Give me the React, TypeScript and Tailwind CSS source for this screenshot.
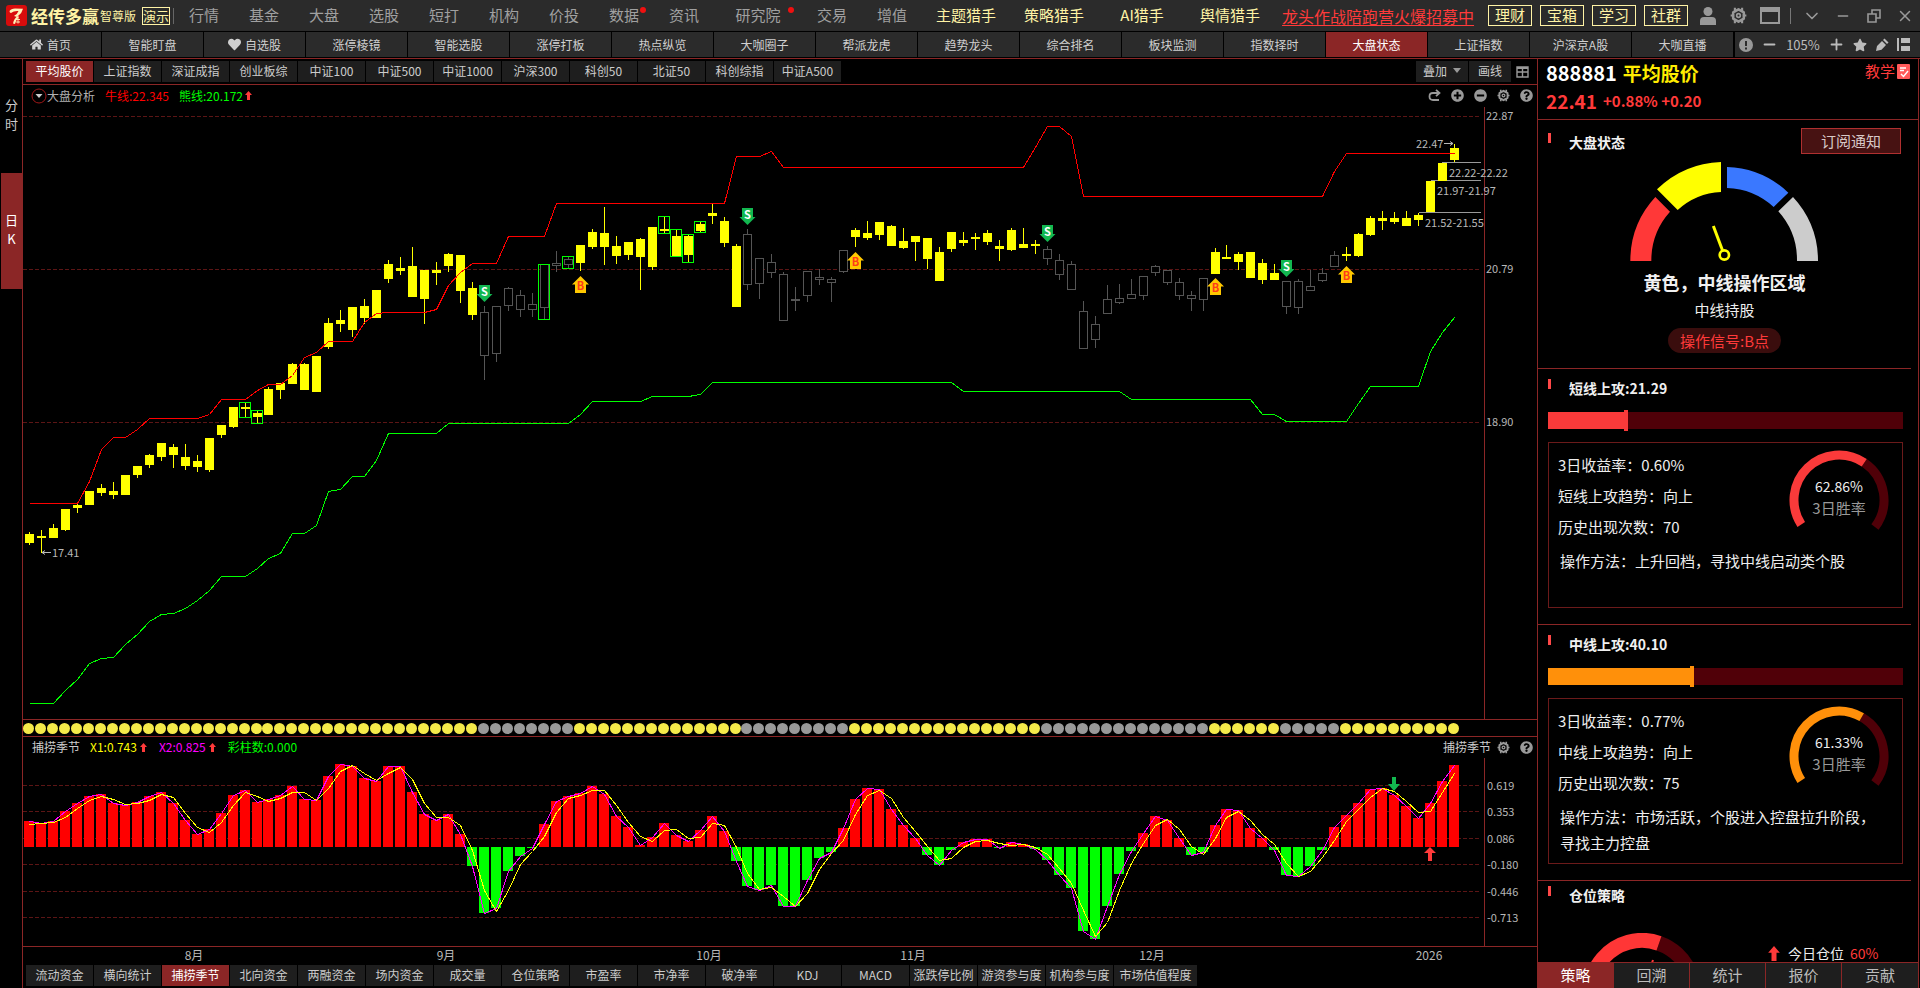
import { ReactNode } from "react";
import clsx from "clsx";
import { ChevronDown, Minus, Plus, X } from "lucide-react";
import { FaHeart, FaHome, FaMinusCircle, FaPlusCircle, FaQuestionCircle, FaStar } from "react-icons/fa";

const MENU = ["行情", "基金", "大盘", "选股", "短打", "机构", "价投", "数据", "资讯", "研究院", "交易", "增值"];
const HUNTERS = ["主题猎手", "策略猎手", "AI猎手", "舆情猎手"];
const BOXED = ["理财", "宝箱", "学习", "社群"];

const PAGES = [
  "首页", "智能盯盘", "自选股", "涨停棱镜", "智能选股", "涨停打板", "热点纵览", "大咖圈子", "帮派龙虎",
  "趋势龙头", "综合排名", "板块监测", "指数择时", "大盘状态", "上证指数", "沪深京A股", "大咖直播",
];

const INDEXES = [
  "平均股价", "上证指数", "深证成指", "创业板综", "中证100", "中证500",
  "中证1000", "沪深300", "科创50", "北证50", "科创综指", "中证A500",
];

const INDICATORS = [
  "流动资金", "横向统计", "捕捞季节", "北向资金", "两融资金", "场内资金", "成交量", "仓位策略", "市盈率",
  "市净率", "破净率", "KDJ", "MACD", "涨跌停比例", "游资参与度", "机构参与度", "市场估值程度",
];

const SIDE_TABS = ["策略", "回溯", "统计", "报价", "贡献"];

// body top, body bottom, high, low
const CANDLES: number[][] = [
  [424, 433, 422, 435], [426, 428, 420, 443], [418, 428, 414, 428], [399, 420, 399, 421], [395, 398, 394, 403],
  [381, 395, 381, 395], [378, 383, 374, 386], [381, 385, 372, 389], [365, 385, 365, 385], [356, 365, 356, 368],
  [345, 355, 344, 358], [333, 347, 333, 351], [337, 345, 334, 358], [347, 356, 334, 360], [351, 357, 345, 362],
  [328, 360, 328, 362], [315, 325, 315, 328], [297, 317, 297, 318], [297, 299, 293, 307], [303, 307, 301, 313],
  [279, 305, 277, 305], [273, 280, 273, 289], [254, 274, 253, 274], [254, 280, 253, 280], [246, 282, 246, 282],
  [213, 237, 208, 239], [210, 214, 200, 222], [197, 220, 197, 227], [196, 208, 189, 214], [180, 208, 180, 208],
  [154, 169, 150, 173], [158, 161, 147, 165], [156, 187, 137, 187], [160, 189, 160, 214], [160, 163, 152, 175],
  [144, 156, 143, 162], [145, 181, 145, 193], [178, 205, 172, 210], [202, 246, 196, 270], [196, 244, 196, 252],
  [178, 196, 177, 201], [185, 200, 180, 207], [194, 200, 183, 207], [154, 198, 154, 210], [153, 156, 141, 162],
  [149, 155, 146, 158], [135, 153, 135, 161], [122, 137, 119, 139], [123, 137, 97, 155], [136, 146, 126, 154],
  [132, 145, 132, 150], [129, 147, 128, 180], [117, 157, 117, 160], [119, 121, 106, 123], [126, 146, 119, 146],
  [126, 145, 124, 152], [114, 121, 111, 122], [103, 106, 94, 114], [111, 133, 107, 137], [136, 197, 134, 197],
  [124, 175, 119, 180], [148, 174, 148, 189], [152, 163, 144, 168], [164, 211, 162, 211], [189, 191, 177, 201],
  [161, 186, 161, 192], [167, 170, 159, 175], [169, 173, 167, 192], [140, 162, 140, 163], [120, 127, 118, 137],
  [123, 128, 111, 130], [112, 125, 112, 130], [116, 136, 115, 136], [131, 138, 118, 139], [126, 132, 126, 151],
  [128, 149, 128, 159], [142, 171, 137, 171], [122, 139, 122, 142], [130, 133, 122, 136], [127, 129, 123, 140],
  [123, 132, 120, 135], [136, 139, 130, 151], [120, 140, 118, 141], [134, 138, 118, 138], [134, 136, 130, 144],
  [139, 149, 136, 155], [150, 165, 144, 170], [154, 180, 151, 180], [201, 239, 191, 239], [214, 230, 206, 238],
  [189, 204, 175, 204], [188, 193, 174, 194], [184, 189, 169, 189], [166, 186, 166, 190], [156, 163, 155, 166],
  [160, 173, 160, 175], [172, 186, 168, 190], [185, 189, 181, 201], [168, 190, 168, 201], [142, 164, 138, 164],
  [147, 149, 135, 149], [144, 152, 142, 160], [142, 168, 142, 168], [153, 170, 149, 174], [163, 170, 154, 170],
  [171, 197, 171, 204], [171, 198, 169, 204], [176, 181, 160, 181], [163, 171, 158, 172], [145, 157, 141, 157],
  [144, 146, 137, 151], [124, 146, 123, 147], [108, 125, 106, 126], [108, 111, 101, 120], [108, 112, 102, 114],
  [108, 116, 101, 116], [105, 110, 103, 116], [71, 102, 71, 102], [53, 71, 53, 71], [38, 50, 34, 52],
];

// index, top, bottom
const FRAMES = [[18, 292, 308], [19, 300, 314], [43, 154, 210], [45, 146, 159], [53, 106, 124], [54, 119, 147], [55, 124, 153], [56, 111, 123]];

const SELLS = [[38, 175], [60, 98], [85, 115], [105, 150]];
const BUYS = [[46, 166], [69, 142], [99, 168], [110, 156]];

// index, y
const BULL = [
  [0, 393], [4, 393], [5, 371], [6, 339], [7, 327], [8, 327], [9, 319], [10, 308], [14, 308], [15, 304], [16, 289],
  [18, 289], [19, 280], [20, 274], [21, 274], [22, 265], [23, 247], [24, 242], [25, 231], [27, 231], [28, 212],
  [29, 203], [30, 202], [33, 202], [34, 199], [35, 175], [36, 162], [37, 153], [39, 153], [40, 126], [43, 126],
  [44, 93], [58, 93], [59, 46], [61, 46], [62, 41], [63, 57], [83, 57], [84, 37], [85, 16], [86, 16], [87, 26],
  [88, 86], [108, 86], [109, 61], [110, 43], [119, 43],
];
const BEAR = [
  [0, 593], [2, 593], [3, 580], [4, 569], [5, 553], [6, 548], [7, 547], [8, 534], [9, 524], [10, 511], [11, 504],
  [12, 503], [13, 498], [14, 490], [15, 480], [16, 466], [18, 466], [19, 458], [20, 448], [21, 443], [22, 423],
  [23, 423], [24, 415], [25, 381], [26, 379], [27, 366], [28, 366], [29, 350], [30, 323], [34, 323], [35, 313],
  [45, 313], [46, 304], [47, 291], [51, 291], [52, 286], [55, 286], [56, 284], [57, 272], [77, 272], [78, 281],
  [91, 281], [92, 289], [102, 289], [103, 304], [104, 304], [105, 311], [110, 311], [111, 293], [112, 276],
  [116, 276], [117, 241], [118, 222], [119, 207],
];

const ZERO = 137;
const X2 = [
  111, 113, 111, 101, 93, 86, 84, 93, 95, 92, 86, 82, 93, 110, 124, 119, 103, 85, 80, 92, 89, 85, 76, 89, 90, 66, 54,
  56, 68, 71, 56, 56, 82, 104, 110, 104, 124, 156, 203, 198, 161, 146, 138, 114, 91, 86, 83, 76, 84, 106, 117, 135,
  127, 113, 125, 131, 120, 106, 121, 151, 176, 180, 175, 196, 196, 170, 148, 142, 118, 89, 78, 79, 99, 115, 128, 145,
  155, 140, 132, 129, 129, 138, 132, 134, 139, 150, 165, 178, 221, 229, 196, 164, 141, 123, 106, 110, 128, 145, 142,
  115, 99, 100, 118, 128, 140, 165, 166, 156, 140, 117, 105, 93, 79, 78, 85, 96, 108, 93, 71, 55,
];
const X1 = [
  114, 113, 112, 107, 98, 90, 86, 89, 94, 93, 90, 84, 87, 103, 117, 122, 112, 95, 82, 86, 91, 88, 82, 82, 90, 78, 61,
  55, 63, 70, 63, 57, 69, 93, 107, 107, 115, 140, 180, 201, 180, 154, 141, 126, 102, 88, 85, 80, 80, 95, 112, 126,
  131, 120, 119, 128, 127, 113, 115, 137, 163, 179, 177, 186, 196, 183, 159, 143, 130, 104, 85, 80, 88, 107, 121, 136,
  150, 148, 137, 131, 130, 133, 135, 134, 137, 144, 158, 173, 200, 226, 212, 180, 153, 133, 115, 109, 119, 136, 144,
  128, 107, 101, 110, 124, 134, 153, 166, 161, 147, 130, 111, 99, 87, 78, 81, 91, 102, 101, 82, 63,
];

const MONTHS: [number, string][] = [[171, "8月"], [423, "9月"], [686, "10月"], [890, "11月"], [1129, "12月"], [1406, "2026"]];

const xAt = (i: number) => Math.floor(6.48 + 11.975 * i);
const toPoints = (list: number[][]) => list.map(([i, y]) => `${xAt(i) + 0.5},${y + 0.5}`).join(" ");

// stretches in which the system is out of the market
const isIdle = (i: number) =>
  (i >= 38 && i <= 45) || (i >= 60 && i <= 68) || (i >= 85 && i <= 98) || (i >= 105 && i <= 109);

function Gear({ className }: { className?: string }) {
  return (
    <svg viewBox="0 0 16 16" className={className} fill="none" stroke="currentColor">
      <path d="M8 2.2 L13 5.1 V10.9 L8 13.8 L3 10.9 V5.1 Z" strokeWidth="2.4" strokeLinejoin="round" />
      <path d="M4.6 .8v3 M11.4 .8v3 M4.6 12.2v3 M11.4 12.2v3 M0.6 8h2.4 M13 8h2.4" strokeWidth="2" />
      <circle cx="8" cy="8" r="1.7" strokeWidth="1.6" />
    </svg>
  );
}

function RiseArrow({ className }: { className?: string }) {
  return (
    <svg viewBox="0 0 7 9" className={clsx("shrink-0 text-[#ff3a3a]", className)} fill="currentColor">
      <path d="M3.500 0L7 4H5V9H2V4H0Z" />
    </svg>
  );
}

function IconButton({ label, className, children }: { label: string; className?: string; children: ReactNode }) {
  return (
    <button aria-label={label} className={clsx("flex shrink-0 items-center justify-center", className)}>
      {children}
    </button>
  );
}

function TopBar() {
  return (
    <header className="flex h-8 shrink-0 items-center border-b border-black bg-[#2b2b2b] whitespace-nowrap text-[#a0a0a0]">
      <svg viewBox="0 0 21 21" className="ml-1.5 size-[21px] shrink-0">
        <rect width="21" height="21" rx="3" fill="#d80c0c" />
        <path d="M3.500 6Q5 3.500 9 3.500L17 3.800Q16 8 12.500 10.500L11 12L8 11Q11.500 9 12.500 6Q8 5.500 5 8Q3.500 8 3.500 6Z" fill="#fff2b8" />
        <path d="M12 11Q8 13 7 18.500L9 19Q9.500 15 13 12Z" fill="#fff2b8" />
        <path d="M10 14.500h4M10 17h4M12 12.500v6" stroke="#fff2b8" strokeWidth=".9" />
      </svg>
      <h1 className="ml-1 text-[17px] font-bold text-[#fff3a5]">经传多赢</h1>
      <span className="ml-px text-xs text-[#fff3a5]">智尊版</span>
      <span className="ml-1.5 flex h-[18px] items-center border border-[#fff3a5] text-[13px] text-[#fff3a5]">演示</span>
      <i className="ml-[3px] h-4 w-px bg-[#666]" />
      <nav className="flex text-[15px]">
        {MENU.map((name) => (
          <a key={name} href="#" className={clsx("relative text-center", name === "研究院" ? "w-22" : "w-15")}>
            {name}
            {(name === "数据" || name === "研究院") && (
              <i className="absolute top-[3px] right-2 size-1.5 rounded-full bg-[#f01010]" />
            )}
          </a>
        ))}
        {HUNTERS.map((name) => (
          <a key={name} href="#" className="w-22 text-center text-[#fff3a5]">{name}</a>
        ))}
      </nav>
      <a href="#" className="ml-2 text-base text-[#ff3a3a] underline underline-offset-2">龙头作战陪跑营火爆招募中</a>
      <div className="ml-3.5 flex gap-2">
        {BOXED.map((name) => (
          <button key={name} className="flex h-[21px] w-11 items-center justify-center border border-[#fff3a5] text-[15px] text-[#fff3a5]">
            {name}
          </button>
        ))}
      </div>
      <div className="ml-auto flex items-center text-[#999]">
        <IconButton label="用户" className="w-[31px]">
          <svg viewBox="0 0 16 18" className="h-[18px] w-4" fill="currentColor">
            <circle cx="8" cy="4.500" r="4.500" />
            <path d="M0 18V14q0-4 4-4h8q4 0 4 4v4z" />
          </svg>
        </IconButton>
        <IconButton label="设置" className="w-[31px]"><Gear className="size-[17px]" /></IconButton>
        <IconButton label="窗口" className="w-[31px]">
          <svg viewBox="0 0 20 17" className="h-[17px] w-5" fill="none" stroke="currentColor">
            <path d="M1 1h18v15H1z" strokeWidth="2" />
            <path d="M0 3h20" strokeWidth="4" />
          </svg>
        </IconButton>
        <i className="mx-[5px] h-4 w-px bg-[#777]" />
        <IconButton label="展开" className="w-[31px]"><ChevronDown className="size-5" strokeWidth={2} /></IconButton>
        <IconButton label="最小化" className="w-[31px]"><Minus className="size-4" strokeWidth={2} /></IconButton>
        <IconButton label="还原" className="w-[31px]">
          <svg viewBox="0 0 14 14" className="size-3.5" fill="none" stroke="currentColor" strokeWidth="1.6">
            <path d="M1 5h8v8H1zM5 5V1h8v8H9" />
          </svg>
        </IconButton>
        <IconButton label="关闭" className="w-[31px]"><X className="size-[18px]" strokeWidth={2} /></IconButton>
      </div>
    </header>
  );
}

function PageTabs() {
  return (
    <nav className="mb-px flex h-[25px] shrink-0 items-stretch bg-[#2b2b2b] text-xs whitespace-nowrap text-[#d0d0d0]">
      {PAGES.map((name) => (
        <a
          key={name}
          href="#"
          className={clsx("flex w-[102px] items-center justify-center gap-1 border-r border-black", name === "大盘状态" && "bg-[#8b2626] text-white")}
        >
          {name === "首页" && <FaHome className="size-[13px]" />}
          {name === "自选股" && <FaHeart className="size-[13px]" />}
          {name}
        </a>
      ))}
      <div className="flex flex-1 items-center justify-between border-l border-black pr-2.5 pl-1 text-[#bbb]">
        <IconButton label="提示">
          <svg viewBox="0 0 14 14" className="size-3.5">
            <circle cx="7" cy="7" r="7" fill="#999" />
            <path d="M7 3v5M7 9.500v2" stroke="#2b2b2b" strokeWidth="2" />
          </svg>
        </IconButton>
        <IconButton label="缩小"><Minus className="size-[17px]" strokeWidth={2.6} /></IconButton>
        <span className="text-[13px]">105%</span>
        <IconButton label="放大"><Plus className="size-[17px]" strokeWidth={2.6} /></IconButton>
        <IconButton label="收藏"><FaStar className="size-3.5" /></IconButton>
        <IconButton label="画笔">
          <svg viewBox="0 0 14 14" className="size-3.5" fill="currentColor">
            <path d="M1 13L2 8L7 3L11 7L6.500 11.800ZM8 2L9.500 .5L13.500 4.500L12 6Z" />
          </svg>
        </IconButton>
        <IconButton label="布局">
          <svg viewBox="0 0 13 13" className="size-[13px]" fill="currentColor">
            <path d="M0 0h2v13H0zM4 0h9v5H4zM4 8h9v5H4z" />
          </svg>
        </IconButton>
      </div>
    </nav>
  );
}

function TabRow({ names, active }: { names: string[]; active: string }) {
  return (
    <div className="flex h-[21px] gap-px text-xs whitespace-nowrap text-[#ccc]">
      {names.map((name) => (
        <button
          key={name}
          className={clsx(
            "h-full pb-0.5",
            name === "市场估值程度" ? "w-[83px]" : "w-[67px]",
            name === active ? "bg-[#8b2626] text-white" : "bg-[#1e1e1e]",
          )}
        >
          {name}
        </button>
      ))}
    </div>
  );
}

function PriceChart() {
  return (
    <svg viewBox="0 -3 1514 612" className="block h-full w-full" fontSize="11" fill="#b8b8b8">
      {[6, 159, 312].map((y) => (
        <path key={y} d={`M0 ${y + 0.5}H1457`} stroke="#5c1515" strokeDasharray="4 2" shapeRendering="crispEdges" />
      ))}
      <path d="M1461.500 -3V609" stroke="#8b2626" />
      <text x="1463" y="10">22.87</text>
      <text x="1463" y="163">20.79</text>
      <text x="1463" y="316">18.90</text>

      <g shapeRendering="crispEdges">
        <path d="M1419 52.500H1458M1408 70.500H1458M1396 102.500H1458" stroke="#999" />
        {CANDLES.map(([top, bottom, high, low], i) => {
          const x = xAt(i);
          const idle = isIdle(i);
          return (
            <g key={i} fill={idle ? "#555" : "#ff0"}>
              <rect x={x} y={high} width="1" height={low - high} />
              <rect x={x - 4} y={top} width="9" height={bottom - top} />
              {idle && bottom - top > 2 && <rect x={x - 3} y={top + 1} width="7" height={bottom - top - 2} fill="#000" />}
            </g>
          );
        })}
        {FRAMES.map(([i, top, bottom]) => (
          <rect key={i} x={xAt(i) - 5.5} y={top + 0.5} width="11" height={bottom - top - 1} fill="none" stroke="#0f0" />
        ))}
        <polyline points={toPoints(BULL)} fill="none" stroke="#f00" />
        <polyline points={toPoints(BEAR)} fill="none" stroke="#0f0" />
      </g>

      {SELLS.map(([i, y]) => (
        <g key={i} transform={`translate(${xAt(i) - 7} ${y})`}>
          <path d="M2 0H13V9H15.500L7.500 17L-.5 9H2Z" fill="#12b850" />
          <text x="7.500" y="11" textAnchor="middle" fontWeight="700" fill="#fff">S</text>
        </g>
      ))}
      {BUYS.map(([i, y]) => (
        <g key={i} transform={`translate(${xAt(i) - 7} ${y})`}>
          <path d="M2 17H13V8.500H16L7.500 0L-1 8.500H2Z" fill="#ffc800" />
          <text x="7.500" y="14" textAnchor="middle" fontWeight="700" fill="#ff3a1a">B</text>
        </g>
      ))}

      <path d="M19 442.500H28M22 440.500L19 442.500L22 444.500" stroke="#b8b8b8" fill="none" />
      <text x="29" y="447">17.41</text>
      <path d="M1421 33.500H1430M1427 31.500L1430 33.500L1427 35.500" stroke="#b8b8b8" fill="none" />
      <text x="1393" y="38">22.47</text>
      <text x="1426" y="67">22.22-22.22</text>
      <text x="1414" y="85">21.97-21.97</text>
      <text x="1402" y="117">21.52-21.55</text>
    </svg>
  );
}

function SeasonChart() {
  return (
    <svg viewBox="0 48 1514 188" className="block h-full w-full" fontSize="11" fill="#b8b8b8">
      {[[75, "0.619"], [101, "0.353"], [128, "0.086"], [154, "-0.180"], [181, "-0.446"], [207, "-0.713"]].map(([y, label]) => (
        <g key={label}>
          <path d={`M0 ${Number(y) + 0.5}H1456`} stroke="#5c1515" strokeDasharray="4 2" shapeRendering="crispEdges" />
          <text x="1464" y={Number(y) + 5}>{label}</text>
        </g>
      ))}
      <path d="M1461.500 48V236" stroke="#8b2626" />
      <g shapeRendering="crispEdges">
        {X2.map((y, i) => (
          <rect
            key={i}
            x={xAt(i) - 5}
            y={Math.min(y, ZERO)}
            width="10"
            height={Math.abs(ZERO - y)}
            fill={y < ZERO ? "#f00" : "#0f0"}
          />
        ))}
        <polyline points={toPoints(X2.map((y, i) => [i, y]))} fill="none" stroke="#f0f" />
        <polyline points={toPoints(X1.map((y, i) => [i, y]))} fill="none" stroke="#ff0" />
      </g>
      <path d="M1369 67h4v7h4l-6 7l-6-7h4z" fill="#12b850" />
      <path d="M1405 151h4v-8h4l-6-6l-6 6h4z" fill="#ff3a3a" />
    </svg>
  );
}

function ChartArea() {
  return (
    <section className="flex min-w-0 flex-1 flex-col">
      <div className="flex h-[26px] shrink-0 justify-between border-b border-[#8b2626] pt-0.5 pr-2 pl-[3px]">
        <TabRow names={INDEXES} active="平均股价" />
        <div className="flex h-[21px] items-center gap-px text-xs text-[#ccc]">
          <button className="flex h-full w-13 items-center justify-center gap-1.5 bg-[#1e1e1e] pb-0.5">
            叠加
            <svg viewBox="0 0 8 5" className="h-[5px] w-2" fill="#999"><path d="M0 0h8L4 5z" /></svg>
          </button>
          <button className="h-full w-[42px] bg-[#1e1e1e] pb-0.5">画线</button>
          <IconButton label="网格" className="ml-1">
            <svg viewBox="0 0 13 12" className="h-3 w-[13px]" fill="none" stroke="#999" strokeWidth="1.4">
              <path d="M1 1h11v10H1zM1 6h11M6.500 1v10" />
              <path d="M1 2h11" strokeWidth="2" />
            </svg>
          </IconButton>
        </div>
      </div>

      <div className="flex h-[22px] shrink-0 items-center pr-1 pb-px pl-2 text-xs whitespace-nowrap">
        <IconButton label="切换指标">
          <svg viewBox="0 0 16 16" className="size-4">
            <circle cx="8" cy="8" r="7" fill="none" stroke="#a01818" />
            <path d="M4.500 6h7L8 10z" fill="#ccc" />
          </svg>
        </IconButton>
        <span className="text-[#b0b0b0]">大盘分析</span>
        <span className="ml-2.5 text-[#f00]">牛线:22.345</span>
        <span className="ml-2.5 text-[#0f0]">熊线:20.172</span>
        <RiseArrow className="ml-0.5 h-[9px] w-[7px]" />
        <div className="ml-auto flex gap-2.5 text-[#999]">
          <IconButton label="恢复">
            <svg viewBox="0 0 13 13" className="size-[13px]" fill="none" stroke="currentColor" strokeWidth="1.8">
              <path d="M11 11H5Q1.500 11 1.500 7.500T5 4H11M8 .8L11.500 4L8 7.200" />
            </svg>
          </IconButton>
          <IconButton label="放大"><FaPlusCircle className="size-[13px]" /></IconButton>
          <IconButton label="缩小"><FaMinusCircle className="size-[13px]" /></IconButton>
          <IconButton label="参数"><Gear className="size-[13px]" /></IconButton>
          <IconButton label="帮助"><FaQuestionCircle className="size-[13px]" /></IconButton>
        </div>
      </div>

      <div className="min-h-0 flex-1"><PriceChart /></div>

      <div className="h-[18px] shrink-0 border-y border-[#8b2626]">
        <svg viewBox="0 0 1514 16" className="block h-full w-full">
          {CANDLES.map((_, i) => (
            <circle key={i} cx={xAt(i) - 0.5} cy="8.500" r="5.500" fill={isIdle(i) ? "#999" : "#f5ea4a"} />
          ))}
        </svg>
      </div>

      <div className="flex h-[21px] shrink-0 items-center gap-2.5 pr-1 pb-px pl-[9px] text-xs whitespace-nowrap">
        <span className="text-[#ccc]">捕捞季节</span>
        <span className="flex items-center text-[#ff0]">X1:0.743<RiseArrow className="mr-0.5 ml-[3px] h-[9px] w-[7px]" /></span>
        <span className="flex items-center text-[#f0f]">X2:0.825<RiseArrow className="mr-0.5 ml-[3px] h-[9px] w-[7px]" /></span>
        <span className="text-[#0f0]">彩柱数:0.000</span>
        <span className="ml-auto text-[#ccc]">捕捞季节</span>
        <IconButton label="参数" className="-ml-1 text-[#999]"><Gear className="size-[13px]" /></IconButton>
        <IconButton label="帮助" className="text-[#999]"><FaQuestionCircle className="size-[13px]" /></IconButton>
      </div>

      <div className="h-[188px] shrink-0"><SeasonChart /></div>

      <div className="h-[19px] shrink-0 border-t border-[#8b2626]">
        <svg viewBox="0 0 1514 18" className="block h-full w-full" fontSize="12" fill="#b8b8b8" textAnchor="middle">
          {MONTHS.map(([x, name]) => <text key={name} x={x} y="13">{name}</text>)}
        </svg>
      </div>

      <div className="mb-0.5 shrink-0 pl-[3px]">
        <TabRow names={INDICATORS} active="捕捞季节" />
      </div>
    </section>
  );
}

function SectionTitle({ children }: { children: ReactNode }) {
  return (
    <h2 className="flex h-5 items-start gap-[18px] text-sm leading-[18px] font-bold text-[#f0f0f0]">
      <i className="h-2.5 w-[3px] bg-[#ff4848]" />
      {children}
    </h2>
  );
}

const polar = (deg: number, r: number) => {
  const rad = (deg * Math.PI) / 180;
  return `${50 + r * Math.cos(rad)} ${50 + r * Math.sin(rad)}`;
};

function RateRing({ rate, color }: { rate: number; color: string }) {
  const start = 147;
  const sweep = 250;
  const mid = start + (sweep * rate) / 100;
  return (
    <div className="relative h-[84px] w-[100px]">
      <svg viewBox="0 0 100 84" className="h-full w-full" fill="none" strokeWidth="9">
        <path d={`M${polar(mid, 45)}A45 45 0 0 1 ${polar(start + sweep, 45)}`} stroke="#500008" />
        <path d={`M${polar(start, 45)}A45 45 0 0 1 ${polar(mid, 45)}`} stroke={color} />
      </svg>
      <div className="absolute inset-x-0 top-[26px] text-center">
        <p className="text-sm leading-[21px] text-[#eee]">{rate.toFixed(2)}%</p>
        <p className="text-[15px] leading-[21px] text-[#999]">3日胜率</p>
      </div>
    </div>
  );
}

interface AttackProps {
  name: string;
  value: number;
  profit: string;
  count: number;
  rate: number;
  advice: string;
  color: string;
}

function AttackSection({ name, value, profit, count, rate, advice, color }: AttackProps) {
  return (
    <section className="h-64 border-b border-[#8b2626] pt-2.5 pr-2 pl-2.5">
      <SectionTitle>{name}:{value.toFixed(2)}</SectionTitle>
      <div className="mt-[11px] flex h-[21px] items-center">
        <div className="flex h-[17px] w-full items-center bg-[#500008]">
          <div className="h-full" style={{ width: `${value}%`, backgroundColor: color }} />
          <div className="h-[21px] w-1" style={{ backgroundColor: color }} />
        </div>
      </div>
      <div className="mt-[11px] h-[166px] border border-[#6b1a1a] pr-[13px] pl-[9px] text-[15px] text-[#eee]">
        <div className="flex justify-between">
          <ul className="pt-1.5 leading-[31px]">
            <li>3日收益率：{profit}</li>
            <li>{name}趋势：向上</li>
            <li>历史出现次数：{count}</li>
          </ul>
          <div className="pt-[7px]"><RateRing rate={rate} color={color} /></div>
        </div>
        <p className="mt-1.5 pr-2 pl-0.5 leading-[26px]">操作方法：{advice}</p>
      </div>
    </section>
  );
}

function SidePanel() {
  return (
    <aside className="mr-px flex w-[382px] shrink-0 flex-col border-x border-[#8b2626]">
      <div className="flex h-[61px] shrink-0 justify-between border-b border-[#8b2626] pr-2 pl-2">
        <div className="font-bold whitespace-nowrap">
          <p className="flex h-7 items-center gap-1.5 text-xl text-white">
            888881 <span className="text-[19px] text-[#ffec00]">平均股价</span>
          </p>
          <p className="flex h-7 items-center gap-1.5 text-[19px] text-[#ff3a3a]">
            22.41 <span className="text-[15px]">+0.88% +0.20</span>
          </p>
        </div>
        <a href="#" className="flex h-6 items-center gap-0.5 text-[15px] text-[#ff3a3a]">
          教学
          <svg viewBox="0 0 13 15" className="h-[15px] w-[13px]">
            <rect width="13" height="15" rx="1" fill="#ff5a5a" />
            <path d="M3 4h6M3 6.500h4M4 10l2.500 2.500L11 7" stroke="#fff" strokeWidth="1.4" fill="none" />
          </svg>
        </a>
      </div>

      <div className="min-h-0 flex-1 overflow-hidden pr-[7px]">
        <section className="relative flex h-[249px] flex-col items-center border-b border-[#8b2626] pt-[41px]">
          <div className="absolute inset-x-0 top-2 flex justify-between pr-2.5 pl-2.5">
            <div className="pt-[5px]"><SectionTitle>大盘状态</SectionTitle></div>
            <button className="h-[26px] w-[100px] border border-[#b03030] bg-[#471212] text-[15px] leading-6 text-[#d8c8c8]">订阅通知</button>
          </div>
          <svg viewBox="300 153 567 300" className="h-[100px] w-[189px]">
            <path d="M301 453A282 282 0 0 1 376 261L420 305A219 219 0 0 0 364 453Z" fill="#ff3838" />
            <path d="M381 238A290 290 0 0 1 573 156V246A208 208 0 0 0 443 300Z" fill="#ff0" />
            <path d="M591 171A282 282 0 0 1 775 248L731 291A219 219 0 0 0 591 234Z" fill="#3a78ff" />
            <path d="M789 261A282 282 0 0 1 864 453H801A219 219 0 0 0 745 304Z" fill="#ccc" />
            <circle cx="583" cy="435" r="14" fill="none" stroke="#ff0" strokeWidth="8" />
            <path d="M550 348L578 422" stroke="#ff0" strokeWidth="9" />
          </svg>
          <p className="mt-[7px] text-lg leading-7 font-bold text-[#f0f0f0]">黄色，中线操作区域</p>
          <p className="mt-0.5 text-[15px] leading-6 text-[#eee]">中线持股</p>
          <p className="mt-1.5 rounded-full bg-[#3a0d0d] px-3 text-[15px] leading-[25px] text-[#ff3a3a]">操作信号:B点</p>
        </section>

        <AttackSection name="短线上攻" value={21.29} profit="0.60%" count={70} rate={62.86} advice="上升回档，寻找中线启动类个股" color="#fa3a3a" />
        <AttackSection name="中线上攻" value={40.1} profit="0.77%" count={75} rate={61.33} advice="市场活跃，个股进入控盘拉升阶段，寻找主力控盘" color="#ff900a" />

        <section className="pt-[5px] pr-2 pl-2.5">
          <SectionTitle>仓位策略</SectionTitle>
          <div className="mt-[27px] flex">
            <svg viewBox="0 0 118 118" className="ml-[35px] size-[118px]" fill="none" strokeWidth="15">
              <path d="M76 10.300A51.500 51.500 0 0 1 104 84" stroke="#500008" />
              <path d="M14 84A51.500 51.500 0 0 1 76 10.300" stroke="#ff3636" />
              <path d="M70 27L59 59" stroke="#ff3636" strokeWidth="2" />
            </svg>
            <p className="ml-[67px] flex h-6 items-center pt-4 text-sm whitespace-nowrap text-[#eee]">
              <RiseArrow className="mr-2 h-[15px] w-3" />
              今日仓位 <span className="ml-1.5 text-[#ff3a3a]">60%</span>
            </p>
          </div>
        </section>
      </div>

      <div className="grid h-[26px] shrink-0 grid-cols-5 border-t border-[#8b2626] text-[15px] text-[#bbb]">
        {SIDE_TABS.map((name) => (
          <button
            key={name}
            className={clsx("border-r border-[#8b2626] last:border-r-0", name === "策略" ? "bg-[#8b2626] text-white" : "bg-[#1e1e1e]")}
          >
            {name}
          </button>
        ))}
      </div>
    </aside>
  );
}

export default function App() {
  return (
    <div className="flex h-screen min-h-[800px] flex-col overflow-hidden bg-black font-['Noto_Sans_CJK_SC',sans-serif]">
      <TopBar />
      <PageTabs />
      <main className="flex min-h-0 flex-1 border-t border-[#8b2626]">
        <nav className="flex w-[23px] shrink-0 flex-col border-r border-[#8b2626] pl-px text-[13px] leading-[19px] text-[#ccc]">
          <button className="h-[114px] pb-1">分<br />时</button>
          <button className="h-[116px] bg-[#8b2626] pb-1 text-white">日<br />K</button>
        </nav>
        <ChartArea />
        <SidePanel />
      </main>
    </div>
  );
}
